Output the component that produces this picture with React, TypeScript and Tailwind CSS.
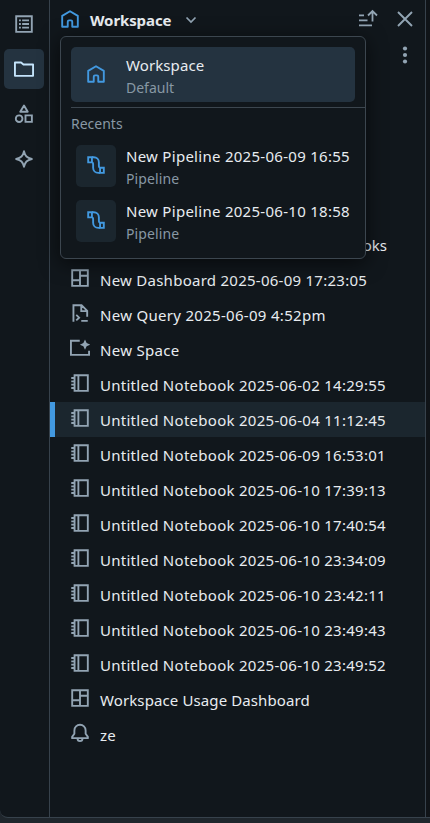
import React from "react";

type IconProps = { className?: string; children: React.ReactNode };

function Glyph({ className = "", children }: IconProps) {
  return (
    <svg
      viewBox="0 0 16 16"
      fill="none"
      stroke="currentColor"
      strokeWidth="1.5"
      className={`size-5 shrink-0 ${className}`}
    >
      {children}
    </svg>
  );
}

const Home = ({ className = "" }: { className?: string }) => (
  <Glyph className={className}>
    <path strokeLinejoin="round" d="M1.75 5.5 8 1.75l6.25 3.75v8.7H9.8v-4.1a1 1 0 0 0-1-1H7.2a1 1 0 0 0-1 1v4.1H1.75z" />
  </Glyph>
);

const Pipeline = () => (
  <Glyph className="-mt-[2px] text-[#4299e0]">
    <path d="M1.75 1.75h3v4.1h-3zM11.25 10.15h3v4.1h-3z" />
    <path d="M4.75 1.75H6.2c2.4 0 4.1 1.7 4.1 4.1v2.6c0 1.1.2 1.7.95 1.7M4.75 5.85c.75 0 .95.6.95 1.7v2.6c0 2.4 1.7 4.1 4.1 4.1h1.45" />
  </Glyph>
);

const Dashboard = () => (
  <Glyph>
    <path d="M1.75 1.75h12.5v12.5H1.75zM8 1.75v12.5M8 6.2h6.25M1.75 9.8H8" />
  </Glyph>
);

const Query = () => (
  <Glyph>
    <path d="M2.75 15V1.75h6.5l4.5 4.5V11M9 1.75v4.75h4.75M5 9.5l2.3 2.2L5 13.9M9 14.3h5.2" />
  </Glyph>
);

const Space = () => (
  <Glyph>
    <path d="M7.8 2.2H.75v11.3h14.5v-3.3" />
    <path fill="currentColor" stroke="none" d="M12 1.2l1.3 2.8 2.8 1.3-2.8 1.3-1.3 2.8-1.3-2.8-2.8-1.3 2.8-1.3z" />
  </Glyph>
);

const Notebook = () => (
  <Glyph>
    <path d="M3.65 1.75h10.6v12.5H3.65zM6.7 1.75v12.5M1 4h2.6M1 6.7h2.6M1 9.3h2.6M1 12h2.6" />
  </Glyph>
);

const Bell = () => (
  <Glyph>
    <path strokeLinejoin="round" d="M8 1.4a4.5 4.5 0 0 0-4.5 4.5v2.7l-1.8 2.5v1h12.6v-1l-1.8-2.5V5.9A4.5 4.5 0 0 0 8 1.4zM6 12.2c0 3.1 4 3.1 4 0" />
  </Glyph>
);

const List = () => (
  <Glyph>
    <path d="M1.75 1.75h12.5v12.5H1.75zM4 5.1h1.5M4 8h1.5M4 10.9h1.5M6.5 5.1H12M6.5 8H12M6.5 10.9H12" />
  </Glyph>
);

const Folder = () => (
  <Glyph className="text-[#c4e4fb]">
    <path strokeLinejoin="round" d="M.75 2.75h4.9l1.9 1.6h7.7v9.1H.75z" />
  </Glyph>
);

const Shapes = () => (
  <Glyph>
    <path strokeLinejoin="round" d="M8 1.2l3 5H5z" />
    <circle cx="4.1" cy="11.7" r="2.65" />
    <path d="M9.2 9.1h5.1v5.2H9.2z" />
  </Glyph>
);

const Sparkle = () => (
  <Glyph>
    <path strokeLinejoin="round" d="M8 1.7c.9 4 2.3 5.4 6.3 6.3-4 .9-5.4 2.3-6.3 6.3C7.1 10.3 5.7 8.9 1.7 8 5.7 7.1 7.1 5.7 8 1.7z" />
  </Glyph>
);

const rows: { icon: () => React.ReactElement; label: string; spacing: string; active?: boolean }[] = [
  { icon: Dashboard, label: "New Dashboard 2025-06-09 17:23:05", spacing: "tracking-[0.26px]" },
  { icon: Query, label: "New Query 2025-06-09 4:52pm", spacing: "tracking-[0.3px]" },
  { icon: Space, label: "New Space", spacing: "tracking-[0.3px]" },
  { icon: Notebook, label: "Untitled Notebook 2025-06-02 14:29:55", spacing: "tracking-[0.275px]" },
  { icon: Notebook, label: "Untitled Notebook 2025-06-04 11:12:45", spacing: "tracking-[0.275px]", active: true },
  { icon: Notebook, label: "Untitled Notebook 2025-06-09 16:53:01", spacing: "tracking-[0.275px]" },
  { icon: Notebook, label: "Untitled Notebook 2025-06-10 17:39:13", spacing: "tracking-[0.275px]" },
  { icon: Notebook, label: "Untitled Notebook 2025-06-10 17:40:54", spacing: "tracking-[0.275px]" },
  { icon: Notebook, label: "Untitled Notebook 2025-06-10 23:34:09", spacing: "tracking-[0.275px]" },
  { icon: Notebook, label: "Untitled Notebook 2025-06-10 23:42:11", spacing: "tracking-[0.275px]" },
  { icon: Notebook, label: "Untitled Notebook 2025-06-10 23:49:43", spacing: "tracking-[0.275px]" },
  { icon: Notebook, label: "Untitled Notebook 2025-06-10 23:49:52", spacing: "tracking-[0.275px]" },
  { icon: Dashboard, label: "Workspace Usage Dashboard", spacing: "tracking-[0.11px]" },
  { icon: Bell, label: "ze", spacing: "tracking-[0.3px]" },
];

const recents = ["New Pipeline 2025-06-09 16:55", "New Pipeline 2025-06-10 18:58"];

function Switcher() {
  return (
    <div className="absolute top-9 left-[10px] h-[223px] w-[306px] rounded-md border border-[#3c464f] bg-[#11171c] pt-[10px] pl-[10px] shadow-[0_4px_20px_rgba(0,0,0,0.6)]">
      <div className="flex h-[55px] w-[284px] items-center rounded-[5px] bg-[#243340] pl-[15px]">
        <Home className="-mt-[2px] text-[#4299e0]" />
        <div className="mt-[3px] ml-5 flex flex-col">
          <span className="h-[23px] leading-[22px] tracking-[0.1px]">Workspace</span>
          <span className="h-[22px] text-[14px] leading-[22px] text-[#8898a4]">Default</span>
        </div>
      </div>
      <div className="mt-[5px] h-px bg-[#3c464f]" />
      <div className="mt-[5px] h-[22px] text-[14px] leading-[22px] text-[#8898a4]">Recents</div>
      <div className="mt-[10px] ml-[5px] flex flex-col gap-[13px]">
        {recents.map((name) => (
          <div key={name} className="flex h-[42px] items-center">
            <div className="flex h-[42px] w-10 items-center justify-center rounded-[5px] bg-[#1b262e]">
              <Pipeline />
            </div>
            <div className="mt-[3px] ml-[10px] flex flex-col">
              <span className="h-[23px] leading-[22px] tracking-[0.28px]">{name}</span>
              <span className="h-[22px] text-[14px] leading-[22px] tracking-[0.1px] text-[#8898a4]">Pipeline</span>
            </div>
          </div>
        ))}
      </div>
    </div>
  );
}

export default function App() {
  return (
    <div className="flex h-[823px] w-[430px] flex-col overflow-hidden bg-[#1f262c] font-['Noto_Sans',sans-serif] text-[15px] whitespace-nowrap text-[#e8ecf0]">
      <div className="flex h-[818px] rounded-bl-lg border-b border-[#37424c] bg-[#11171c]">
        <nav className="flex w-[50px] shrink-0 flex-col gap-[5px] border-r border-[#37424c] pt-1 pl-1 text-[#92a4b3]">
          <div className="flex size-10 items-center justify-center"><List /></div>
          <div className="flex size-10 items-center justify-center rounded-[5px] bg-[#243340]"><Folder /></div>
          <div className="flex size-10 items-center justify-center"><Shapes /></div>
          <div className="flex size-10 items-center justify-center"><Sparkle /></div>
        </nav>
        <main className="relative flex w-[376px] shrink-0 flex-col border-r border-[#37424c]">
          <header className="flex h-10 items-center pl-[10px]">
            <Home className="-mt-[2px] text-[#4299e0]" />
            <span className="ml-[10px] w-[82px] font-bold tracking-[-0.1px]">Workspace</span>
            <svg viewBox="0 0 12 12" fill="none" stroke="#92a4b3" strokeWidth="1.7" className="ml-[13px] size-3">
              <path d="M1.5 3.5 6 8l4.5-4.5" />
            </svg>
            <svg viewBox="0 0 20 20" fill="none" stroke="#92a4b3" strokeWidth="1.8" className="-mt-[2px] ml-[161px] size-5">
              <path d="M1 6.3h5M1 11.3h8.5M1 16.3h13M14.5 12.5V2.5M10 6.5L14.5 2 19 6.5" />
            </svg>
            <svg viewBox="0 0 20 20" fill="none" stroke="#92a4b3" strokeWidth="1.9" className="-mt-[2px] ml-[17px] size-5">
              <path d="M3 3l14 14M17 3 3 17" />
            </svg>
          </header>
          <div className="flex h-[187px] justify-end pt-[5px] pr-[10px]">
            <svg viewBox="0 0 20 20" fill="#92a4b3" className="size-5">
              <circle cx="10" cy="3.5" r="2.1" />
              <circle cx="10" cy="10" r="2.1" />
              <circle cx="10" cy="16.5" r="2.1" />
            </svg>
          </div>
          <div className="flex h-[35px] items-center justify-end pt-[2px] pr-[38px]">oks</div>
          {rows.map(({ icon: Icon, label, spacing, active }) => (
            <div
              key={label}
              className={
                active
                  ? "flex h-[35px] items-center border-l-[5px] border-[#4299e0] bg-[#1b262e] pl-[15px]"
                  : "flex h-[35px] items-center pl-5"
              }
            >
              <span className="-mt-[3px] text-[#92a4b3]"><Icon /></span>
              <span className={`ml-[10px] mt-[2px] ${spacing}`}>{label}</span>
            </div>
          ))}
          <Switcher />
        </main>
        <div className="grow bg-[#101418]" />
      </div>
    </div>
  );
}
